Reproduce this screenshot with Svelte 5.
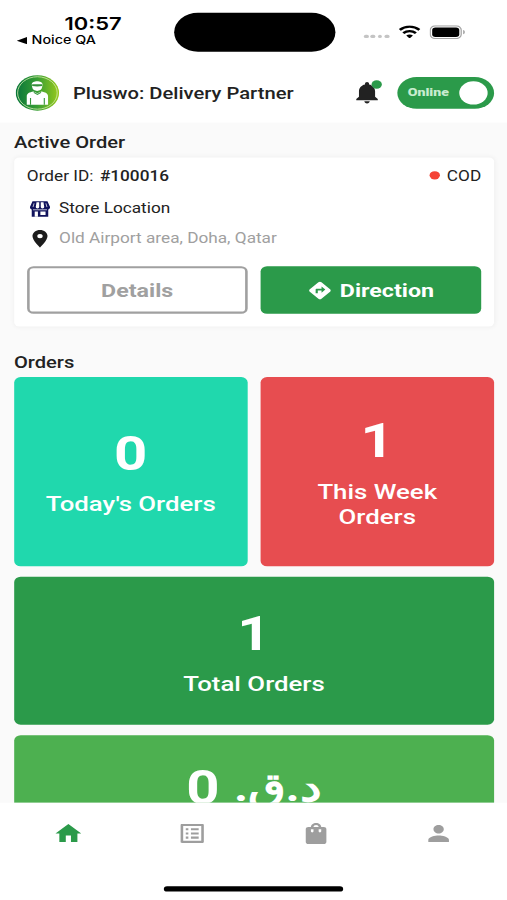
<script lang="ts">
  let online = $state(true);

  const order = {
    id: "#100016",
    payment: "COD",
    place: "Store Location",
    address: "Old Airport area, Doha, Qatar",
  };

  const tabs = [
    { name: "Home", path: "M10 20v-6h4v6h5v-8h3L12 3 2 12h3v8z" },
    {
      name: "Order requests",
      path: "M19 5v14H5V5h14m1.1-2H3.9c-.5 0-.9.4-.9.9v16.2c0 .4.4.9.9.9h16.2c.4 0 .9-.5.9-.9V3.9c0-.5-.5-.9-.9-.9zM11 7h6v2h-6V7zm0 4h6v2h-6v-2zm0 4h6v2h-6zM7 7h2v2H7zm0 4h2v2H7zm0 4h2v2H7z",
    },
    {
      name: "Orders",
      path: "M18 6h-2c0-2.21-1.79-4-4-4S8 3.79 8 6H6c-1.1 0-2 .9-2 2v12c0 1.1.9 2 2 2h12c1.1 0 2-.9 2-2V8c0-1.1-.9-2-2-2zm-8 4c0 .55-.45 1-1 1s-1-.45-1-1V8h2v2zm2-6c1.1 0 2 .9 2 2h-4c0-1.1.9-2 2-2zm4 6c0 .55-.45 1-1 1s-1-.45-1-1V8h2v2z",
    },
    {
      name: "Profile",
      path: "M12 12c2.21 0 4-1.79 4-4s-1.79-4-4-4-4 1.79-4 4 1.79 4 4 4zm0 2c-2.67 0-8 1.34-8 4v2h16v-2c0-2.66-5.33-4-8-4z",
    },
  ];
  let activeTab = $state("Home");
</script>

<div class="device">
  <div class="screen">
    <div class="status">
      <div class="status-left">
        <div class="time">10:57</div>
        <div class="back">
          <svg width="8" height="7" viewBox="0 0 8 7"><path d="M0 3.5 8 0v7z" /></svg>
          <span>Noice QA</span>
        </div>
      </div>
      <div class="island"></div>
      <div class="status-right">
        <div class="signal"><i></i><i></i><i></i><i></i></div>
        <svg class="wifi" width="17" height="12.4" viewBox="0 0 17 12.4">
          <path
            fill="none"
            stroke="#000"
            stroke-width="2.2"
            d="M.9 4.3C5.3.2 11.7.2 16.1 4.3M3.6 7.4c2.9-2.6 6.9-2.6 9.8 0"
          />
          <path d="M8.5 12.4 5.9 9.7c1.5-1.3 3.7-1.3 5.2 0z" />
        </svg>
        <svg class="battery" width="27.5" height="13" viewBox="0 0 27.5 13">
          <rect x=".5" y=".5" width="24" height="12" rx="3.8" fill="none" stroke="#a5a5a5" />
          <rect x="2" y="2" width="21" height="9" rx="2.5" />
          <path fill="#a5a5a5" d="M26 4.5c1.8.6 1.8 3.4 0 4z" />
        </svg>
      </div>
    </div>

    <header>
      <svg class="logo" width="34" height="34" viewBox="0 0 35 35">
        <defs>
          <linearGradient id="badge">
            <stop offset="0" stop-color="#08753b" />
            <stop offset=".5" stop-color="#389e32" />
            <stop offset="1" stop-color="#9aca1c" />
          </linearGradient>
        </defs>
        <circle cx="17.5" cy="17.5" r="17.3" fill="url(#badge)" />
        <circle cx="17.5" cy="17.5" r="15.8" fill="none" stroke="#d5ecb0" stroke-width=".7" />
        <path fill="#fff" d="M13 9.2c0-4.3 8.6-4.3 8.6 0l-.3 2.6c-.5 5-7.5 5-8 0z" />
        <path fill="#348f3a" d="M13.3 8.9h8v1.9c-2.5.5-5.5.5-8 0z" />
        <path fill="#fff" d="M9 29V21c0-3 2.2-4 5.3-4.8l3.2 1.6 3.2-1.6c3.1.8 5.3 1.8 5.3 4.8v8z" />
        <path fill="none" stroke="#329638" stroke-width=".9" d="M12 29v-6.5M23 29v-6.5M14.6 17l2.9 2 2.9-2" />
      </svg>
      <h1>Pluswo: Delivery Partner</h1>
      <div class="bell">
        <svg width="25" height="25" viewBox="0 0 24 24">
          <path
            d="M12 22c1.1 0 2-.9 2-2h-4c0 1.1.89 2 2 2zm6-6v-5c0-3.07-1.64-5.64-4.5-6.32V4c0-.83-.67-1.5-1.5-1.5s-1.5.67-1.5 1.5v.68C7.63 5.36 6 7.92 6 11v5l-2 2v1h16v-1l-2-2z"
          />
        </svg>
        <span class="bell-dot"></span>
      </div>
      <button class="switch" class:off={!online} onclick={() => (online = !online)}>
        <span>{online ? "Online" : "Offline"}</span>
        <i></i>
      </button>
    </header>

    <main>
      <h2>Active Order</h2>
      <section class="order">
        <div class="order-top">
          <span class="label">Order ID:</span>
          <b>{order.id}</b>
          <i></i>
          <span class="payment">{order.payment}</span>
        </div>
        <div class="line store">
          <svg width="16" height="16" viewBox="0 0 16 16">
            <path
              fill="#11135c"
              d="M2.2.5h11.6L15.8 6c0 1.3-.7 2.1-1.4 2.3V15.3H1.6V8.3C.9 8.1.2 7.3.2 6z"
            />
            <path
              fill="#fff"
              d="M5.3 1.5h2.1V6a1.3 1.3 0 0 1-2.7 0zM8.6 1.5h2.1l.6 4.5a1.3 1.3 0 0 1-2.7 0zM3.9 10.3h2.5v5H3.9zM8.3 10.3h4v3.2h-4z"
            />
            <path fill="none" stroke="#fff" stroke-width=".6" d="M2.6 8.6h10.8M3.4 2.5 2.6 6M12.6 2.5l.8 3.5" />
          </svg>
          <span>{order.place}</span>
        </div>
        <div class="line address">
          <svg width="20" height="20" viewBox="0 0 24 24">
            <path
              d="M12 2C8.13 2 5 5.13 5 9c0 5.25 7 13 7 13s7-7.75 7-13c0-3.87-3.13-7-7-7zm0 9.5a2.5 2.5 0 0 1 0-5 2.5 2.5 0 0 1 0 5z"
            />
          </svg>
          <span>{order.address}</span>
        </div>
        <div class="actions">
          <button class="details">Details</button>
          <button class="direction">
            <svg width="20" height="20" viewBox="0 0 24 24">
              <path
                fill="#fff"
                d="M21.41 10.59l-7.99-8c-.78-.78-2.05-.78-2.83 0l-8.01 8c-.78.78-.78 2.05 0 2.83l8.01 8c.78.78 2.05.78 2.83 0l7.99-8c.79-.79.79-2.05 0-2.83zM13.5 14.5V12H10v3H8v-4c0-.55.45-1 1-1h4.5V7.5L17 11l-3.5 3.5z"
              />
            </svg>
            Direction
          </button>
        </div>
      </section>

      <h2 class="orders-title">Orders</h2>
      <div class="stats">
        <div class="stat today">
          <strong>0</strong>
          <span>Today's Orders</span>
        </div>
        <div class="stat week">
          <strong>1</strong>
          <span>This Week Orders</span>
        </div>
        <div class="stat wide total">
          <strong>1</strong>
          <span>Total Orders</span>
        </div>
        <div class="stat wide cash">
          <strong dir="rtl"><em>د.ق.&rlm;</em> 0</strong>
        </div>
      </div>
    </main>

    <nav>
      <div class="tabs">
        {#each tabs as tab}
          <button
            class:active={activeTab === tab.name}
            aria-label={tab.name}
            onclick={() => (activeTab = tab.name)}
          >
            <svg width="24" height="24" viewBox="0 0 24 24"><path d={tab.path} /></svg>
          </button>
        {/each}
      </div>
      <div class="home-bar"></div>
    </nav>
  </div>
</div>

<style>
  :global(body) {
    margin: 0;
    background: #fff;
  }

  .device {
    width: 507px;
    height: 900px;
    overflow: hidden;
  }

  /* 393x852 screen stretched to the frame */
  .screen {
    display: flex;
    flex-direction: column;
    width: 393px;
    height: 852px;
    transform: scale(1.29008, 1.05634);
    transform-origin: 0 0;
    background: #fff;
    color: #222;
    font-family: Roboto, sans-serif;
  }

  .screen * {
    box-sizing: border-box;
  }

  svg {
    display: block;
    flex: none;
  }

  button {
    padding: 0;
    border: 0;
    background: none;
    font-family: inherit;
  }

  .status {
    display: grid;
    grid-template-columns: 134.5px 125px 1fr;
    flex: none;
    height: 59px;
    color: #000;
    font-family: Inter, sans-serif;
  }

  .time {
    margin: 12px 0 0 50px;
    font-size: 17px;
    font-weight: 600;
    line-height: 20px;
  }

  .back {
    display: flex;
    align-items: center;
    gap: 3.5px;
    margin-left: 13px;
    font-size: 11.1px;
    font-weight: 500;
    line-height: 12px;
  }

  .island {
    height: 37px;
    margin-top: 12px;
    border-radius: 19px;
    background: #000;
  }

  .status-right {
    display: flex;
    align-items: flex-start;
    padding-left: 22.5px;
  }

  .signal {
    display: flex;
    gap: 1.6px;
    margin-top: 32.5px;
  }

  .signal i {
    width: 3.7px;
    height: 3.7px;
    border-radius: 50%;
    background: #c4c4c4;
  }

  .wifi {
    margin: 23.5px 0 0 7px;
  }

  .battery {
    margin: 23.5px 0 0 7.5px;
  }

  header {
    display: flex;
    align-items: center;
    flex: none;
    height: 56.5px;
    padding: 1px 10px 0 11.5px;
  }

  h1 {
    flex: 1;
    margin: 1px 0 0 11px;
    font-size: 15.65px;
    font-weight: 500;
    white-space: nowrap;
  }

  .bell {
    position: relative;
    margin-right: 11px;
    fill: #222;
  }

  .bell-dot {
    position: absolute;
    top: 1px;
    right: 1px;
    width: 8px;
    height: 8px;
    border-radius: 50%;
    background: #2b9a4a;
  }

  .switch {
    display: flex;
    align-items: center;
    justify-content: space-between;
    width: 75px;
    height: 30px;
    padding: 0 5.5px 0 8px;
    border-radius: 15px;
    background: #2b9a4a;
    color: #c8eccf;
    font-size: 11px;
    font-weight: 900;
  }

  .switch.off {
    background: #9e9e9e;
  }

  .switch i {
    width: 22px;
    height: 22px;
    border-radius: 50%;
    background: #fff;
  }

  main {
    flex: 1;
    min-height: 0;
    padding: 10px 10px 0 10.8px;
    overflow: hidden;
    background: #fafafa;
  }

  h2 {
    margin: 0;
    font-size: 15.6px;
    font-weight: 500;
    line-height: 19px;
  }

  .order {
    height: 160px;
    margin-top: 4px;
    padding: 8.5px 10px 0;
    border-radius: 4px;
    background: #fff;
    box-shadow: 0 0 5px rgba(0, 0, 0, 0.05);
  }

  .order-top {
    display: flex;
    align-items: center;
    height: 18px;
    font-size: 13.35px;
  }

  .order-top b {
    margin-left: 5px;
    font-weight: 500;
  }

  .order-top i {
    width: 8px;
    height: 8px;
    margin: 0 5px 0 auto;
    border-radius: 50%;
    background: #f44336;
  }

  .line {
    display: flex;
    align-items: center;
    font-size: 13.35px;
  }

  .store {
    height: 20px;
    gap: 7px;
    margin-top: 12.5px;
    padding-left: 2px;
  }

  .address {
    height: 20px;
    gap: 5px;
    margin-top: 8px;
    color: #a0a0a0;
  }

  .address svg {
    fill: #1c1c1c;
  }

  .actions {
    display: grid;
    grid-template-columns: 1fr 1fr;
    gap: 10px;
    margin-top: 16.5px;
  }

  .actions button {
    display: flex;
    align-items: center;
    justify-content: center;
    gap: 5px;
    height: 45px;
    border-radius: 5px;
    font-size: 18px;
    font-weight: 700;
  }

  .actions .details {
    border: 2px solid #a0a0a0;
    color: #a0a0a0;
  }

  .actions .direction {
    background: #2b9a4a;
    color: #fff;
  }

  .orders-title {
    margin-top: 25px;
  }

  .stats {
    display: grid;
    grid-template-columns: 1fr 1fr;
    grid-template-rows: 179.5px 140px 140px;
    gap: 10px;
    margin-top: 4px;
  }

  .stat {
    display: flex;
    flex-direction: column;
    align-items: center;
    justify-content: center;
    padding: 0 20px;
    border-radius: 5px;
    color: #fff;
    text-align: center;
  }

  .stat strong {
    font-size: 45px;
    font-weight: 700;
    line-height: 53px;
  }

  .stat span {
    margin-top: 10px;
    font-size: 20px;
    font-weight: 500;
    line-height: 23.5px;
  }

  .wide {
    grid-column: span 2;
  }

  .today {
    background: #20d8ad;
  }

  .week {
    background: #e74d50;
  }

  .total {
    background: #2b9a4a;
  }

  .cash {
    justify-content: flex-start;
    padding-top: 22.5px;
    background: #4db050;
  }

  .cash em {
    font-size: 38px;
    font-style: normal;
    line-height: 1;
    vertical-align: 3px;
  }

  nav {
    flex: none;
    height: 92px;
    background: #fff;
  }

  .tabs {
    display: grid;
    grid-template-columns: repeat(4, 1fr);
    height: 58.5px;
    padding: 0 5px 0 5.5px;
  }

  .tabs button {
    display: flex;
    align-items: center;
    justify-content: center;
    fill: #9e9e9e;
  }

  .tabs button.active {
    fill: #2b9a4a;
  }

  .home-bar {
    width: 139.5px;
    height: 5px;
    margin: 20.5px auto 0;
    border-radius: 3px;
    background: #000;
  }
</style>
